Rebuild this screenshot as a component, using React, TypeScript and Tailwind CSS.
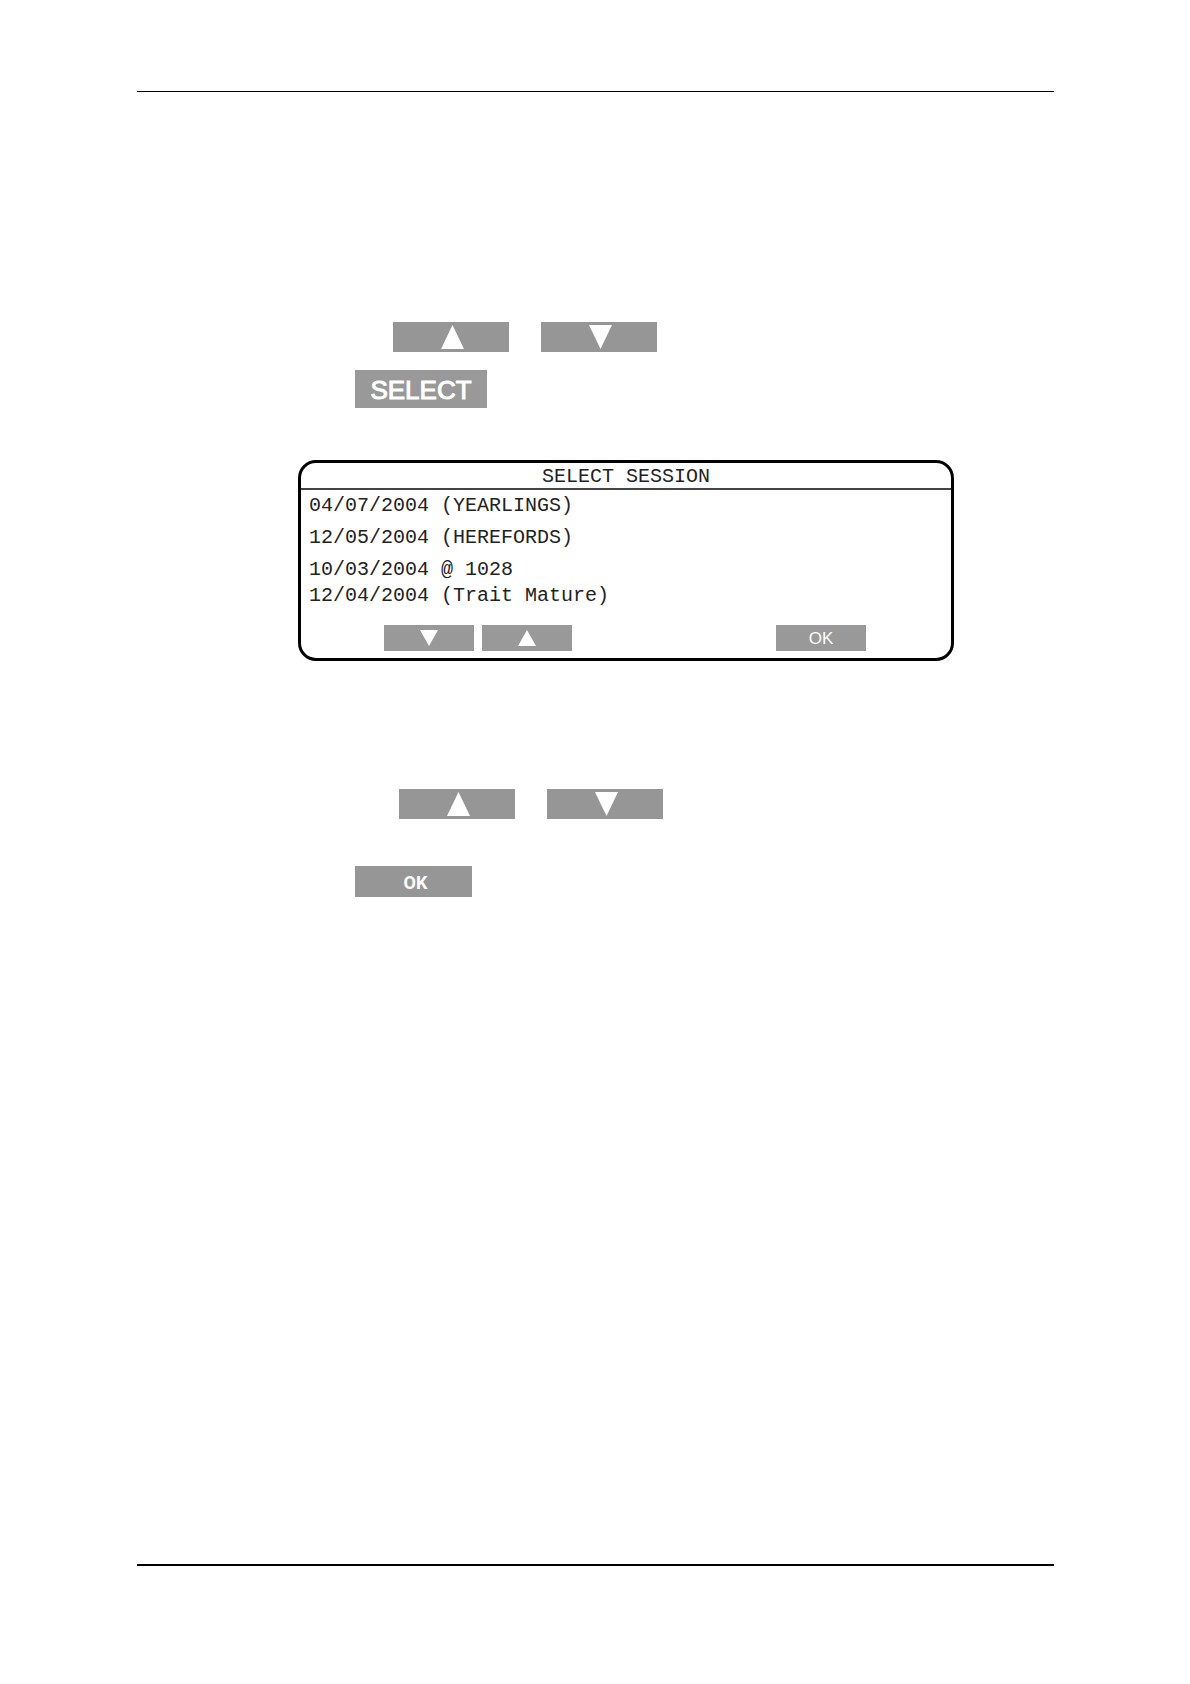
type Direction = "up" | "down";

function Triangle({ direction, className }: { direction: Direction; className: string }) {
  return (
    <svg viewBox="0 0 24 24" preserveAspectRatio="none" className={className} fill="white" aria-hidden="true">
      <path d={direction === "up" ? "M12 0L24 24H0Z" : "M0 0H24L12 24Z"} />
    </svg>
  );
}

function ArrowKey({ direction }: { direction: Direction }) {
  return (
    <button
      type="button"
      aria-label={direction === "up" ? "Up" : "Down"}
      className="flex h-[30px] w-[116px] items-center justify-center bg-[#969696] pl-0.5"
    >
      <Triangle direction={direction} className="h-6 w-[23px]" />
    </button>
  );
}

function SoftKey({ direction }: { direction: Direction }) {
  return (
    <button
      type="button"
      aria-label={direction === "up" ? "Previous session" : "Next session"}
      className="flex h-[26px] w-[90px] items-center justify-center bg-[#999999]"
    >
      <Triangle direction={direction} className="h-4 w-[18px]" />
    </button>
  );
}

const sessions = ["04/07/2004 (YEARLINGS)", "12/05/2004 (HEREFORDS)", "10/03/2004 @ 1028"];

function SessionScreen() {
  return (
    <section className="mr-[100px] ml-[161px] overflow-hidden rounded-[18px] border-[3px] border-black bg-white font-['Liberation_Mono',monospace] text-[20px] text-[#222222]">
      <h1 className="border-b-2 border-[#444444] pt-0.5 text-center leading-[23px]">SELECT SESSION</h1>
      <ul className="pl-2 whitespace-nowrap">
        {sessions.map((session) => (
          <li key={session} className="leading-8">
            {session}
          </li>
        ))}
        <li className="leading-5">12/04/2004 (Trait Mature)</li>
      </ul>
      <div className="mt-[19px] mb-[7px] flex justify-between pr-[85px] pl-[83px]">
        <div className="flex gap-2">
          <SoftKey direction="down" />
          <SoftKey direction="up" />
        </div>
        <button
          type="button"
          className="h-[26px] w-[90px] bg-[#999999] pt-0.5 font-['Liberation_Sans',sans-serif] text-[17px] leading-6 text-white"
        >
          OK
        </button>
      </div>
    </section>
  );
}

export default function App() {
  return (
    <div className="flex min-h-screen flex-col bg-white pt-[91px] pr-[136px] pb-[118px] pl-[137px]">
      <div role="separator" className="h-px bg-black" />
      <main className="pt-[230px]">
        <div className="ml-64 flex gap-8">
          <ArrowKey direction="up" />
          <ArrowKey direction="down" />
        </div>
        <button
          type="button"
          className="mt-[18px] ml-[218px] block h-[38px] w-[132px] bg-[#999999] pt-0.5 font-['Liberation_Sans',sans-serif] text-[26px] leading-9 text-white [-webkit-text-stroke:1px_white]"
        >
          SELECT
        </button>
        <div className="pt-[52px] pb-[128px]">
          <SessionScreen />
        </div>
        <div className="ml-[262px] flex gap-8">
          <ArrowKey direction="up" />
          <ArrowKey direction="down" />
        </div>
        <button
          type="button"
          className="mt-[47px] ml-[218px] block h-[31px] w-[117px] bg-[#969696] pt-0.5 pl-1 font-['Roboto',sans-serif] text-[18px] leading-[29px] font-bold text-white"
        >
          OK
        </button>
      </main>
      <div role="separator" className="mt-auto h-0.5 bg-black" />
    </div>
  );
}
